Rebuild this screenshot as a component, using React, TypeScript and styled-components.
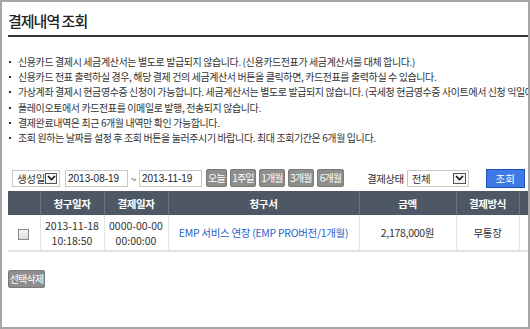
import React from 'react';
import styled, { createGlobalStyle } from 'styled-components';

const GlobalStyle = createGlobalStyle`
  html, body {
    margin: 0;
    padding: 0;
    background: #fff;
  }
  body {
    font-family: "Noto Sans CJK KR", "Noto Sans", sans-serif;
    color: #333;
  }
`;

const Frame = styled.div`
  width: 530px;
  height: 329px;
  box-sizing: border-box;
  border: 2px solid #a6a6a6;
  overflow: hidden;
  padding: 0 0 0 6px;
  white-space: nowrap;
`;

const Title = styled.h1`
  margin: 0;
  padding: 10px 0 6px 0;
  font-size: 15px;
  font-weight: 500;
  line-height: 17px;
  color: #222;
  letter-spacing: -1px;
  border-bottom: 2px solid #333;
`;

const Notes = styled.ul`
  list-style: none;
  margin: 0;
  padding: 17px 0 0 0;
`;

const Note = styled.li`
  position: relative;
  padding-left: 10px;
  font-size: 10px;
  line-height: 15.2px;
  color: #333;
  letter-spacing: -0.4px;

  &::before {
    content: '';
    position: absolute;
    left: 1px;
    top: 7px;
    width: 2px;
    height: 2px;
    background: #333;
  }
`;

const Filter = styled.div`
  display: flex;
  align-items: center;
  margin-top: 23px;
  padding-left: 4px;
  height: 20px;

  & > * {
    flex-shrink: 0;
  }
`;

const SelectBox = styled.div<{ $w: number }>`
  display: flex;
  align-items: center;
  justify-content: space-between;
  box-sizing: border-box;
  width: ${(p) => p.$w}px;
  height: 17px;
  border: 1px solid #c8c8c8;
  background: #fff;
  padding: 0 2px 0 4px;
  font-size: 10.5px;
  color: #333;
  letter-spacing: -0.3px;
`;

const Caret = styled.span`
  display: flex;
  align-items: center;
  justify-content: center;
  box-sizing: border-box;
  width: 13px;
  height: 11px;
  border: 1px solid #555;
  background: #f4f4f4;
`;

const DateInput = styled.div<{ $ml?: number }>`
  box-sizing: border-box;
  width: 63px;
  height: 17px;
  margin-left: ${(p) => p.$ml ?? 0}px;
  border: 1px solid #c8c8c8;
  padding: 0 2px;
  font-family: "Liberation Sans", Arial, sans-serif;
  font-size: 10px;
  line-height: 15px;
  color: #222;
`;

const Tilde = styled.span`
  width: 11px;
  text-align: center;
  font-size: 10px;
  color: #555;
`;

const GrayButton = styled.button<{ $w: number; $ml?: number }>`
  box-sizing: border-box;
  width: ${(p) => p.$w}px;
  height: 18px;
  margin-left: ${(p) => p.$ml ?? 3}px;
  padding: 0;
  border: 1px solid #7a7a7a;
  border-radius: 2px;
  background: #8e8e8e;
  color: #fff;
  font-family: "Noto Sans CJK KR", sans-serif;
  font-size: 10px;
  line-height: 16px;
  letter-spacing: -0.8px;
  text-align: center;
`;

const Label = styled.span`
  margin-left: 23px;
  margin-right: 3px;
  font-size: 10.5px;
  color: #333;
  letter-spacing: -0.5px;
`;

const SearchButton = styled.button`
  box-sizing: border-box;
  width: 39px;
  height: 19px;
  margin-left: 17px;
  border: 1px solid #1f4fb8;
  background: #3e7ae6;
  color: #fff;
  font-family: "Noto Sans CJK KR", sans-serif;
  font-size: 10.5px;
  line-height: 17px;
  padding: 0;
`;

const TableWrap = styled.div`
  margin-top: 3px;
  width: 600px;
`;

const Table = styled.table`
  border-collapse: collapse;
  table-layout: fixed;
  width: 580px;
`;

const Th = styled.th<{ $w: number }>`
  box-sizing: border-box;
  width: ${(p) => p.$w}px;
  height: 24px;
  padding: 0;
  background: #4d5864;
  border-left: 1px solid #6c7680;
  color: #fff;
  font-size: 10.5px;
  font-weight: 700;
  text-align: center;
  letter-spacing: -0.4px;

  &:first-child {
    border-left: none;
  }
`;

const Td = styled.td<{ $link?: boolean }>`
  height: 35px;
  padding: 0;
  border-left: 1px solid #e4e4e4;
  border-bottom: 2px solid #e2e2e2;
  font-size: 10.5px;
  text-align: center;
  color: ${(p) => (p.$link ? '#2a62c9' : '#333')};
  letter-spacing: -0.3px;

  &:first-child {
    border-left: none;
  }
`;

const CellLine = styled.div`
  line-height: 15px;
  letter-spacing: 0;
`;

const Check = styled.span`
  display: inline-block;
  box-sizing: border-box;
  width: 11px;
  height: 11px;
  border: 1px solid #8a8a8a;
  background: linear-gradient(#f4f4f4, #dcdcdc);
  vertical-align: middle;
`;

const DeleteButton = styled(GrayButton)`
  display: block;
  margin: 18px 0 0 0;
  height: 18px;
  line-height: 16px;
`;

const CaretIcon = () => (
  <svg width='9' height='6' viewBox='0 0 9 6'>
    <path d='M1 1 L4.5 4.5 L8 1' fill='none' stroke='#111' strokeWidth='1.6' />
  </svg>
);

const notes = [
  '신용카드 결제시 세금계산서는 별도로 발급되지 않습니다. (신용카드전표가 세금계산서를 대체 합니다.)',
  '신용카드 전표 출력하실 경우, 해당 결제 건의 세금계산서 버튼을 클릭하면, 카드전표를 출력하실 수 있습니다.',
  '가상계좌 결제시 현금영수증 신청이 가능합니다. 세금계산서는 별도로 발급되지 않습니다. (국세청 현금영수증 사이트에서 신청 익일에 확인 가능합니다.)',
  '플레이오토에서 카드전표를 이메일로 발행, 전송되지 않습니다.',
  '결제완료내역은 최근 6개월 내역만 확인 가능합니다.',
  '조회 원하는 날짜를 설정 후 조회 버튼을 눌러주시기 바랍니다. 최대 조회기간은 6개월 입니다.',
];

const periods = [
  { label: '오늘', w: 21, ml: 4 },
  { label: '1주일', w: 26 },
  { label: '1개월', w: 26 },
  { label: '3개월', w: 26 },
  { label: '6개월', w: 27 },
];

export default function App() {
  return (
    <>
      <GlobalStyle />
      <Frame>
        <Title>결제내역 조회</Title>
        <Notes>
          {notes.map((n) => (
            <Note key={n}>{n}</Note>
          ))}
        </Notes>
        <Filter>
          <SelectBox $w={48}>
            생성일
            <Caret><CaretIcon /></Caret>
          </SelectBox>
          <DateInput $ml={5}>2013-08-19</DateInput>
          <Tilde>~</Tilde>
          <DateInput>2013-11-19</DateInput>
          {periods.map((p) => (
            <GrayButton key={p.label} $w={p.w} $ml={p.ml}>{p.label}</GrayButton>
          ))}
          <Label>결제상태</Label>
          <SelectBox $w={62}>
            전체
            <Caret><CaretIcon /></Caret>
          </SelectBox>
          <SearchButton>조회</SearchButton>
        </Filter>
        <TableWrap>
          <Table>
            <thead>
              <tr>
                <Th $w={32}></Th>
                <Th $w={64}>청구일자</Th>
                <Th $w={64}>결제일자</Th>
                <Th $w={191}>청구서</Th>
                <Th $w={97}>금액</Th>
                <Th $w={63}>결제방식</Th>
                <Th $w={69}>세금계산서</Th>
              </tr>
            </thead>
            <tbody>
              <tr>
                <Td><Check /></Td>
                <Td>
                  <CellLine>2013-11-18</CellLine>
                  <CellLine>10:18:50</CellLine>
                </Td>
                <Td>
                  <CellLine>0000-00-00</CellLine>
                  <CellLine>00:00:00</CellLine>
                </Td>
                <Td $link>EMP 서비스 연장 (EMP PRO버전/1개월)</Td>
                <Td>2,178,000원</Td>
                <Td>무통장</Td>
                <Td></Td>
              </tr>
            </tbody>
          </Table>
        </TableWrap>
        <DeleteButton $w={37} $ml={0}>선택삭제</DeleteButton>
      </Frame>
    </>
  );
}
